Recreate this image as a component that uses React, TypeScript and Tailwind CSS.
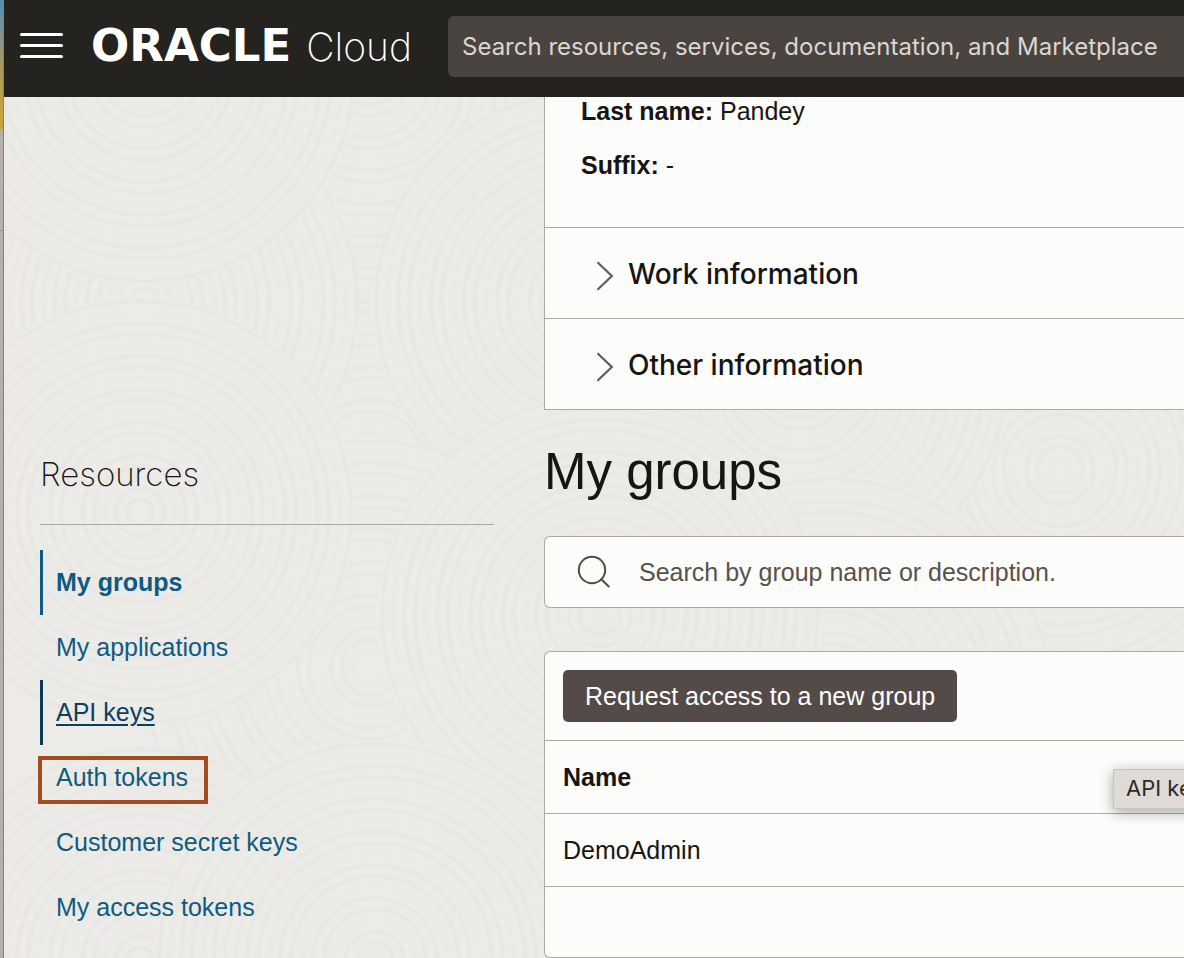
import React from "react";

const ringPatches = [
  { cx: 596, cy: -27, r: 225 },
  { cx: 366, cy: -20, r: 230 },
  { cx: 366, cy: 370, r: 225 },
  { cx: 826, cy: 143, r: 230 },
  { cx: 1056, cy: 373, r: 225 },
  { cx: 581, cy: 205, r: 213 },
  { cx: 141, cy: 205, r: 216 },
  { cx: 141, cy: -25, r: 213 },
  { cx: 366, cy: 570, r: 230 },
  { cx: 796, cy: 280, r: 210 },
  { cx: 826, cy: 603, r: 225 },
  { cx: 596, cy: 518, r: 222 },
  { cx: 136, cy: 415, r: 215 },
  { cx: 136, cy: 863, r: 215 },
  { cx: 371, cy: 863, r: 220 },
];

function SandPattern() {
  return (
    <svg
      aria-hidden="true"
      className="pointer-events-none absolute inset-0 h-full w-full"
      fill="#ecebe8"
      stroke="#e6e5e3"
      strokeWidth="4"
    >
      {ringPatches.map((p, i) => (
        <g key={i}>
          <circle cx={p.cx} cy={p.cy} r={p.r} stroke="none" />
          {Array.from({ length: Math.floor(p.r / 11) }, (_, n) => (
            <circle
              key={n}
              cx={p.cx}
              cy={p.cy}
              r={p.r - 4 - n * 11}
              fill="none"
              strokeOpacity={n % 3 === 1 ? 0.35 : 0.7}
            />
          ))}
        </g>
      ))}
    </svg>
  );
}

function Chevron() {
  return (
    <svg width="18" height="30" viewBox="0 0 18 30" fill="none" stroke="#5f5d5b" strokeWidth="2.2" aria-hidden="true">
      <path d="M1.5 1.2 15.8 15 1.5 28.8" />
    </svg>
  );
}

function Section({ title }: { title: string }) {
  return (
    <button
      type="button"
      className="flex h-[91px] w-full items-center gap-3.5 border-b border-[#afa7a1] pt-0.5 pl-[51px] text-left font-['Inter'] text-[28px] leading-9 font-medium"
    >
      <span className="pt-1">
        <Chevron />
      </span>
      {title}
    </button>
  );
}

const links = [
  { label: "My groups", tone: "border-[#0f5a80] text-[#0f5a80] font-bold" },
  { label: "My applications", tone: "border-transparent text-[#0f5a80]" },
  { label: "API keys", tone: "border-[#0b3b52] text-[#0b3f5c] underline underline-offset-3 decoration-2" },
  { label: "Auth tokens", tone: "border-transparent text-[#0f5a80]", boxed: true },
  { label: "Customer secret keys", tone: "border-transparent text-[#0f5a80]" },
  { label: "My access tokens", tone: "border-transparent text-[#0f5a80]" },
];

export default function App() {
  return (
    <div className="flex h-screen overflow-hidden bg-[#ecebe8] font-['Liberation_Sans',Arial,sans-serif] text-[#161513]">
      <div className="flex w-1 shrink-0 flex-col border-r border-[#85807b] bg-[#b7b0aa]">
        <div className="h-[130px] rounded-br bg-linear-to-b from-[#4d8db5] via-[#a8995c] to-[#cda72c]" />
        <div className="h-[101px] border-b border-[#96908b]" />
      </div>

      <div className="flex min-w-0 flex-1 flex-col">
        <header className="flex h-[97px] shrink-0 items-center bg-[#24231f] pl-4">
          <button type="button" aria-label="Open navigation menu" className="flex w-[43px] shrink-0 flex-col gap-2 pb-1.5">
            <span className="h-[3px] w-full rounded-full bg-white" />
            <span className="h-[3px] w-full rounded-full bg-white" />
            <span className="h-[3px] w-full rounded-full bg-white" />
          </button>
          <a href="#home" className="ml-7 flex w-[321px] shrink-0 items-baseline justify-between pb-1 text-white">
            <span className="font-['DejaVu_Sans'] text-[45px] leading-[60px] font-bold">ORACLE</span>
            <span className="font-['Inter'] text-[39px] leading-[60px] font-extralight">Cloud</span>
          </a>
          <input
            type="text"
            aria-label="Search resources, services, documentation, and Marketplace"
            placeholder="Search resources, services, documentation, and Marketplace"
            className="mb-1 ml-9 h-[61px] min-w-0 flex-1 rounded-l-md bg-[#4a4440] pl-3.5 font-['Inter'] text-[24px] text-white outline-none placeholder:text-[#dbd6d2]"
          />
        </header>

        <div className="relative flex min-h-0 flex-1">
          <SandPattern />

          <aside className="relative w-[540px] shrink-0 pt-[355px] pr-[50px] pl-9">
            <h2 className="border-b border-[#afa7a1] pb-7 font-['Inter'] text-[33px] leading-11 font-extralight">Resources</h2>
            <nav aria-label="Resources" className="pt-[25px] text-[25px]">
              {links.map((l) => (
                <a
                  key={l.label}
                  href="#resource"
                  className={`flex h-[65px] items-center border-l-[3px] pl-[13px] ${l.tone}`}
                >
                  <span className="relative">
                    {l.label}
                    {l.boxed && (
                      <span className="absolute -top-[3px] -right-5 -left-[18px] h-12 border-4 border-[#a44b22]" />
                    )}
                  </span>
                </a>
              ))}
            </nav>
          </aside>

          <main className="relative flex min-w-0 flex-1 flex-col">
            <section className="border-l border-[#afa7a1] bg-[#fcfcfa]">
              <dl className="flex h-[131px] flex-col gap-[26px] border-b border-[#afa7a1] pl-9 text-[25px] leading-7">
                <div className="flex gap-[7px]">
                  <dt className="font-bold">Last name:</dt>
                  <dd>Pandey</dd>
                </div>
                <div className="flex gap-[7px]">
                  <dt className="font-bold">Suffix:</dt>
                  <dd>-</dd>
                </div>
              </dl>
              <Section title="Work information" />
              <Section title="Other information" />
            </section>

            <h1 className="pt-8 text-[51px] leading-15">My groups</h1>

            <label className="mt-[34px] flex h-[72px] shrink-0 items-center gap-7 rounded-l-md border border-r-0 border-[#afa7a1] bg-[#fcfcfa] pl-8">
              <svg width="34" height="34" viewBox="0 0 34 34" fill="none" stroke="#544b46" strokeWidth="2" aria-hidden="true">
                <circle cx="15" cy="15" r="13.2" />
                <path d="m24.3 24.3 7.4 7.2" strokeLinecap="round" />
              </svg>
              <input
                type="text"
                aria-label="Search groups"
                placeholder="Search by group name or description."
                className="min-w-0 flex-1 bg-transparent pt-0.5 text-[25px] outline-none placeholder:text-[#5a514c]"
              />
            </label>

            <section className="mt-[43px] flex-1 rounded-l-md border border-r-0 border-[#afa7a1] bg-[#fcfcfa]">
              <div className="p-[18px]">
                <button type="button" className="h-[52px] rounded-[5px] bg-[#544b48] px-[22px] pt-0.5 text-[25px] text-white">
                  Request access to a new group
                </button>
              </div>
              <table className="w-full border-collapse text-left text-[25px]">
                <thead>
                  <tr className="h-[73px] border-y border-[#afa7a1]">
                    <th scope="col" className="pt-0.5 pl-[18px] font-bold">Name</th>
                  </tr>
                </thead>
                <tbody>
                  <tr className="h-[73px] border-b border-[#afa7a1]">
                    <td className="pt-0.5 pl-[18px]">DemoAdmin</td>
                  </tr>
                </tbody>
              </table>
            </section>
            <div
              role="tooltip"
              className="absolute top-[672px] left-[569px] flex h-10 items-center border border-[#c9c4c0] bg-[#dfdad6] px-3 pb-0.5 font-['Inter'] text-[22px] whitespace-nowrap text-[#2c2a28] shadow-[0_3px_14px_rgba(0,0,0,0.35)]"
            >
              API keys
            </div>
          </main>
        </div>
      </div>
    </div>
  );
}
